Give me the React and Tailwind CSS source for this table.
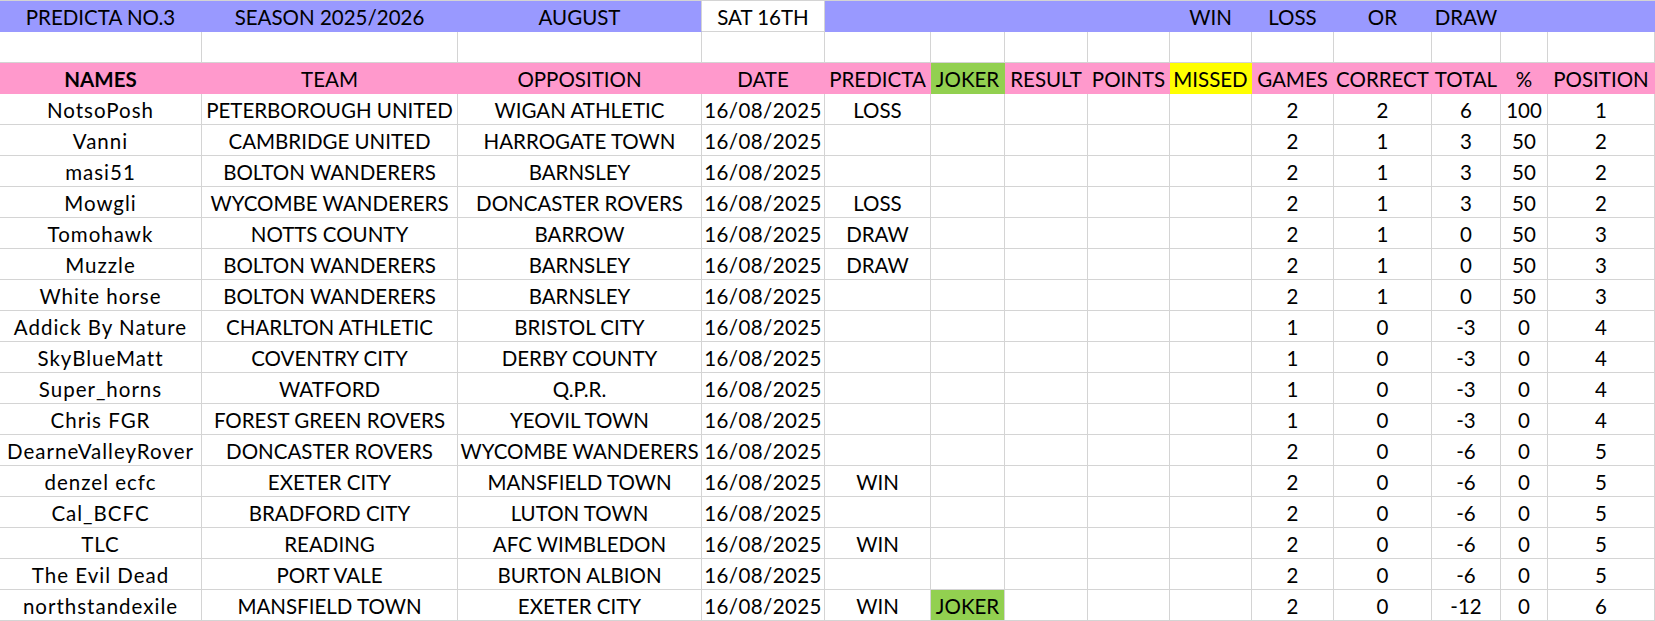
const cols = [
  'w-[202px]', 'w-[256px]', 'w-[244px]', 'w-[123px]', 'w-[106px]', 'w-[74px]', 'w-[83px]',
  'w-[82px]', 'w-[82px]', 'w-[82px]', 'w-[98px]', 'w-[69px]', 'w-[47px]', 'w-[107px]',
];

const headings = [
  'NAMES', 'TEAM', 'OPPOSITION', 'DATE', 'PREDICTA', 'JOKER', 'RESULT', 'POINTS',
  'MISSED', 'GAMES', 'CORRECT', 'TOTAL', '%', 'POSITION',
];

const rows = [
  ['NotsoPosh', 'PETERBOROUGH UNITED', 'WIGAN ATHLETIC', 'LOSS', '', 2, 2, 6, 100, 1],
  ['Vanni', 'CAMBRIDGE UNITED', 'HARROGATE TOWN', '', '', 2, 1, 3, 50, 2],
  ['masi51', 'BOLTON WANDERERS', 'BARNSLEY', '', '', 2, 1, 3, 50, 2],
  ['Mowgli', 'WYCOMBE WANDERERS', 'DONCASTER ROVERS', 'LOSS', '', 2, 1, 3, 50, 2],
  ['Tomohawk', 'NOTTS COUNTY', 'BARROW', 'DRAW', '', 2, 1, 0, 50, 3],
  ['Muzzle', 'BOLTON WANDERERS', 'BARNSLEY', 'DRAW', '', 2, 1, 0, 50, 3],
  ['White horse', 'BOLTON WANDERERS', 'BARNSLEY', '', '', 2, 1, 0, 50, 3],
  ['Addick By Nature', 'CHARLTON ATHLETIC', 'BRISTOL CITY', '', '', 1, 0, -3, 0, 4],
  ['SkyBlueMatt', 'COVENTRY CITY', 'DERBY COUNTY', '', '', 1, 0, -3, 0, 4],
  ['Super_horns', 'WATFORD', 'Q.P.R.', '', '', 1, 0, -3, 0, 4],
  ['Chris FGR', 'FOREST GREEN ROVERS', 'YEOVIL TOWN', '', '', 1, 0, -3, 0, 4],
  ['DearneValleyRover', 'DONCASTER ROVERS', 'WYCOMBE WANDERERS', '', '', 2, 0, -6, 0, 5],
  ['denzel ecfc', 'EXETER CITY', 'MANSFIELD TOWN', 'WIN', '', 2, 0, -6, 0, 5],
  ['Cal_BCFC', 'BRADFORD CITY', 'LUTON TOWN', '', '', 2, 0, -6, 0, 5],
  ['TLC', 'READING', 'AFC WIMBLEDON', 'WIN', '', 2, 0, -6, 0, 5],
  ['The Evil Dead', 'PORT VALE', 'BURTON ALBION', '', '', 2, 0, -6, 0, 5],
  ['northstandexile', 'MANSFIELD TOWN', 'EXETER CITY', 'WIN', 'JOKER', 2, 0, -12, 0, 6],
];

function Cell({ i, className = '', children }) {
  return (
    <div
      className={`${cols[i]} h-[31px] shrink-0 flex items-center justify-center whitespace-nowrap overflow-visible border-r border-b ${className}`}
    >
      <span className="pt-[2px]">{children}</span>
    </div>
  );
}

export default function App() {
  const top = ['PREDICTA NO.3', 'SEASON 2025/2026', 'AUGUST', 'SAT 16TH', '', '', '', '', 'WIN', 'LOSS', 'OR', 'DRAW', '', ''];

  return (
    <div className="w-[1655px] h-[621px] overflow-hidden bg-white border-t border-[#d4d4d4] text-[20.5px] text-black font-['Lato',sans-serif]">
      {/* Title row */}
      <div className="flex">
        {top.map((t, i) => (
          <Cell
            key={i}
            i={i}
            className={
              i === 3
                ? 'bg-white border-[#d4d4d4]'
                : i === 2
                ? 'bg-[#9999ff] border-b-[#9999ff] border-r-[#d4d4d4]'
                : 'bg-[#9999ff] border-[#9999ff]'
            }
          >
            {t}
          </Cell>
        ))}
      </div>

      {/* Blank row */}
      <div className="flex">
        {cols.map((_, i) => (
          <Cell key={i} i={i} className="border-[#d4d4d4]" />
        ))}
      </div>

      {/* Headings */}
      <div className="flex">
        {headings.map((h, i) => (
          <Cell
            key={h}
            i={i}
            className={
              i === 5
                ? 'bg-[#92d050] border-[#92d050]'
                : i === 8
                ? 'bg-[#ffff00] border-[#ffff00]'
                : `bg-[#ff99cc] border-[#ff99cc] ${i === 0 ? 'font-bold' : ''}`
            }
          >
            {h}
          </Cell>
        ))}
      </div>

      {/* Players */}
      {rows.map((r) => {
        const [name, team, opp, pred, joker, games, correct, total, pct, pos] = r;
        const cells = [name, team, opp, '16/08/2025', pred, joker, '', '', '', games, correct, total, pct, pos];
        return (
          <div key={name} className="flex">
            {cells.map((c, i) => (
              <Cell
                key={i}
                i={i}
                className={
                  i === 5 && c
                    ? 'bg-[#92d050] border-[#d4d4d4]'
                    : i === 0
                    ? 'border-[#d4d4d4] tracking-[1px]'
                    : i === 3
                    ? 'border-[#d4d4d4] tracking-[0.4px]'
                    : 'border-[#d4d4d4]'
                }
              >
                {c}
              </Cell>
            ))}
          </div>
        );
      })}
    </div>
  );
}
